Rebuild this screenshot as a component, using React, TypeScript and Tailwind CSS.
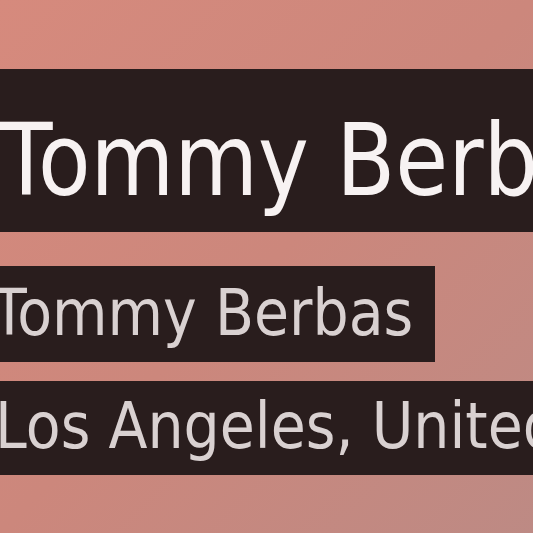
import React from 'react';

const App: React.FC = () => {
  return (
    <div className="w-[533px] h-[533px] overflow-hidden bg-gradient-to-br from-[#d68a7d] via-[#cc877c] to-[#bd8a84] font-['DejaVu_Sans',sans-serif]">
      <div className="flex flex-col pt-[69px]">
        {/* Title band */}
        <div className="h-[163px] bg-[#291d1d] overflow-hidden whitespace-nowrap pt-[48px]">
          <span className="inline-block origin-center scale-y-[1.16] text-[86px] leading-none text-[#f7f2f2]">
            Tommy Berbas
          </span>
        </div>

        {/* Name */}
        <div className="mt-[34px] w-[435px] h-[96px] bg-[#291d1d] overflow-hidden whitespace-nowrap pt-[18px]">
          <span className="inline-block -ml-[8px] scale-y-[1.13] text-[57px] leading-none text-[#d9d1d1]">
            Tommy Berbas
          </span>
        </div>

        {/* Location */}
        <div className="mt-[19px] h-[94px] bg-[#291d1d] overflow-hidden whitespace-nowrap pt-[17px]">
          <span className="inline-block -ml-[5px] scale-y-[1.11] text-[57px] leading-none text-[#d9d1d1]">
            Los Angeles, United States
          </span>
        </div>
      </div>
    </div>
  );
};

export default App;
